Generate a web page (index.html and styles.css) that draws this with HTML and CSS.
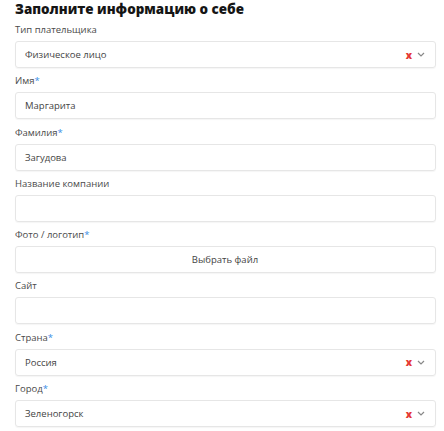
FILE: index.html
```html
<!DOCTYPE html>
<html lang="ru">
<head>
<meta charset="utf-8">
<link rel="stylesheet" href="styles.css">
</head>
<body>
<div class="form">
  <h1 class="title">Заполните информацию о себе</h1>

  <div class="field">
    <div class="label">Тип плательщика</div>
    <div class="box select"><span class="value">Физическое лицо</span><span class="icons"><span class="clear">x</span><svg class="chev" width="8" height="5" viewBox="0 0 8 5"><path d="M1 1l3 3 3-3" fill="none" stroke="#888" stroke-width="1.2"/></svg></span></div>
  </div>

  <div class="field">
    <div class="label">Имя<span class="req">*</span></div>
    <div class="box"><span class="value">Маргарита</span></div>
  </div>

  <div class="field">
    <div class="label">Фамилия<span class="req">*</span></div>
    <div class="box"><span class="value">Загудова</span></div>
  </div>

  <div class="field">
    <div class="label">Название компании</div>
    <div class="box"></div>
  </div>

  <div class="field">
    <div class="label">Фото / логотип<span class="req">*</span></div>
    <div class="box file"><span class="value">Выбрать файл</span></div>
  </div>

  <div class="field">
    <div class="label">Сайт</div>
    <div class="box"></div>
  </div>

  <div class="field">
    <div class="label">Страна<span class="req">*</span></div>
    <div class="box select"><span class="value">Россия</span><span class="icons"><span class="clear">x</span><svg class="chev" width="8" height="5" viewBox="0 0 8 5"><path d="M1 1l3 3 3-3" fill="none" stroke="#888" stroke-width="1.2"/></svg></span></div>
  </div>

  <div class="field">
    <div class="label">Город<span class="req">*</span></div>
    <div class="box select"><span class="value">Зеленогорск</span><span class="icons"><span class="clear">x</span><svg class="chev" width="8" height="5" viewBox="0 0 8 5"><path d="M1 1l3 3 3-3" fill="none" stroke="#888" stroke-width="1.2"/></svg></span></div>
  </div>
</div>
</body>
</html>
```
FILE: styles.css
```css
html, body {
  margin: 0;
  padding: 0;
  background: #fff;
}
body {
  font-family: "Open Sans", "Noto Sans", sans-serif;
  overflow: hidden;
}
.form {
  padding: 2px 8px 0 15px;
}
.title {
  margin: 0 0 8px 0;
  font-size: 13.4px;
  line-height: 14px;
  font-weight: 800;
  color: #151515;
}
.field {
  display: flex;
  flex-direction: column;
  margin-bottom: 7.3px;
}
.label {
  font-size: 9.5px;
  line-height: 12px;
  font-weight: 500;
  color: #4a4a4a;
  margin-bottom: 5px;
}
.req {
  color: #3a8ee6;
}
.box {
  height: 27px;
  box-sizing: border-box;
  border: 1px solid #e6e6e6;
  border-radius: 3px;
  box-shadow: 0 1px 1px rgba(0,0,0,0.04);
  display: flex;
  align-items: center;
  padding: 0 10px 0 9px;
}
.value {
  font-size: 9.5px;
  color: #444;
  flex: 1;
}
.select .value {
  font-weight: 500;
}
.file .value {
  text-align: center;
  font-weight: 500;
}
.icons {
  display: flex;
  align-items: center;
  gap: 5px;
}
.clear {
  color: #e53935;
  font-size: 10px;
  font-weight: 800;
  line-height: 1;
}
.chev {
  display: block;
}
```
